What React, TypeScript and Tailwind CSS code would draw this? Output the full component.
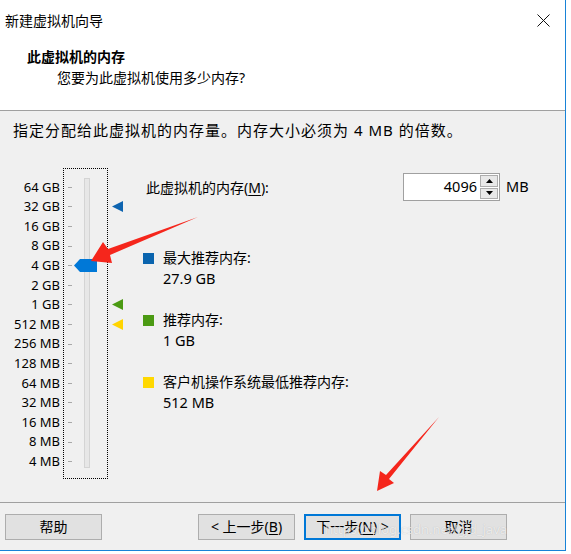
import React from 'react';

const sizes = [
  '64 GB', '32 GB', '16 GB', '8 GB', '4 GB', '2 GB', '1 GB',
  '512 MB', '256 MB', '128 MB', '64 MB', '32 MB', '16 MB', '8 MB', '4 MB',
];

// 右侧三角标记：行号 -> 颜色
const markers: Record<number, string> = { 1: '#0e64b0', 6: '#4b9a13', 7: '#ffd400' };

function Marker({ color }: { color: string }) {
  return (
    <svg width="12" height="11" viewBox="0 0 12 11">
      <polygon points="0,5.5 11,0 11,11" fill={color} />
    </svg>
  );
}

function Legend({ color, title, value, className }: { color: string; title: string; value: string; className?: string }) {
  return (
    <div className={`flex ${className ?? ''}`}>
      <div className="w-[11px] h-[11px] mt-[5px]" style={{ backgroundColor: color }} />
      <div className="ml-[9px] leading-[20px]">
        <div className="text-[14px]">{title}</div>
        <div className="text-[14.5px]">{value}</div>
      </div>
    </div>
  );
}

function Button({ children, primary }: { children: React.ReactNode; primary?: boolean }) {
  return (
    <button
      className={`w-[97px] h-[26px] bg-[#e1e1e1] text-[14px] leading-none flex items-center justify-center ${
        primary ? 'border-2 border-[#0078d7]' : 'border border-[#adadad]'
      }`}
    >
      {children}
    </button>
  );
}

export default function App() {
  return (
    <div className="w-[571px] h-[554px] bg-white text-black relative overflow-hidden font-['Noto_Sans','Noto_Sans_CJK_SC',sans-serif]">
      <div className="w-[566px] h-[551px] border-r border-b border-[#1883d7] flex flex-col">
        {/* 标题栏 */}
        <div className="h-[40px] bg-white flex items-center pl-[5px] pr-[15px]">
          <span className="text-[14px]">新建虚拟机向导</span>
          <svg className="ml-auto" width="13" height="13" viewBox="0 0 13 13">
            <path d="M0.5 0.5 L12.5 12.5 M12.5 0.5 L0.5 12.5" stroke="#111" strokeWidth="1" />
          </svg>
        </div>

        {/* 头部 */}
        <div className="h-[71px] bg-white border-b border-[#a0a0a0] pl-[27px] pt-[7px]">
          <div className="text-[14px] font-bold leading-[20px]">此虚拟机的内存</div>
          <div className="text-[14px] leading-[20px] pl-[30px] mt-[1px]">您要为此虚拟机使用多少内存?</div>
        </div>

        {/* 主体 */}
        <div className="h-[392px] bg-[#f0f0f0] border-b border-[#a0a0a0] pt-[9px]">
          <div className="pl-[13px] text-[15px] tracking-[1px] leading-[20px] whitespace-nowrap">
            指定分配给此虚拟机的内存量。内存大小必须为 4 MB 的倍数。
          </div>

          <div className="flex items-start mt-[28px]">
            {/* 刻度文字 */}
            <div className="w-[60px] pt-[9.6px] flex flex-col items-end">
              {sizes.map((s) => (
                <div key={s} className="h-[19.6px] flex items-center text-[13px] whitespace-nowrap">
                  {s}
                </div>
              ))}
            </div>

            {/* 滑块 */}
            <div className="ml-[3px] w-[45px] h-[311px] border border-dotted border-black relative flex">
              <div className="pt-[8.6px] pl-[4px] flex flex-col">
                {sizes.map((s) => (
                  <div key={s} className="h-[19.6px] flex items-center">
                    <div className="w-[4px] h-px bg-[#a8a8a8]" />
                  </div>
                ))}
              </div>
              <div className="ml-[12px] mt-[9px] w-[6px] h-[290px] bg-[#e7e7e7] border border-[#d4d4d4]" />
              <svg className="absolute left-[10px] top-[90px]" width="23" height="13" viewBox="0 0 23 13">
                <polygon points="0,6.5 6,0 23,0 23,13 6,13" fill="#0078d7" />
              </svg>
            </div>

            {/* 标记 */}
            <div className="ml-[4px] w-[12px] pt-[9.6px] flex flex-col">
              {sizes.map((s, i) => (
                <div key={s} className="h-[19.6px] flex items-center">
                  {markers[i] && <Marker color={markers[i]} />}
                </div>
              ))}
            </div>

            {/* 右侧 */}
            <div className="ml-[19px] flex flex-col">
              <div className="mt-[5px] flex items-center h-[28px]">
                <div className="w-[260px] pl-[3px] text-[14px]">
                  此虚拟机的内存(<span className="underline underline-offset-2">M</span>):
                </div>
                <div className="flex h-[28px] w-[97px] border border-[#a0a0a0] bg-white">
                  <div className="flex-1 flex items-center justify-end pr-[2px] text-[14.5px]">4096</div>
                  <div className="w-[20px] flex flex-col gap-px p-px">
                    <div className="flex-1 bg-[#e8e8e8] border border-[#adadad] flex items-center justify-center">
                      <svg width="7" height="4" viewBox="0 0 7 4"><polygon points="0,4 3.5,0 7,4" fill="#000" /></svg>
                    </div>
                    <div className="flex-1 bg-[#e8e8e8] border border-[#adadad] flex items-center justify-center">
                      <svg width="7" height="4" viewBox="0 0 7 4"><polygon points="0,0 7,0 3.5,4" fill="#000" /></svg>
                    </div>
                  </div>
                </div>
                <div className="ml-[6px] text-[14.5px]">MB</div>
              </div>

              <Legend className="mt-[47px]" color="#0a64ae" title="最大推荐内存:" value="27.9 GB" />
              <Legend className="mt-[22px]" color="#4b9a13" title="推荐内存:" value="1 GB" />
              <Legend className="mt-[22px]" color="#ffd800" title="客户机操作系统最低推荐内存:" value="512 MB" />
            </div>
          </div>
        </div>

        {/* 底部按钮 */}
        <div className="flex-1 bg-[#f0f0f0] flex items-start pt-[11px] pl-[5px]">
          <Button>帮助</Button>
          <div className="ml-[96px] flex gap-[9px]">
            <Button>&lt; 上一步(<span className="underline underline-offset-2">B</span>)</Button>
            <Button primary>下一步(<span className="underline underline-offset-2">N</span>) &gt;</Button>
            <Button>取消</Button>
          </div>
        </div>
      </div>

      {/* 标注箭头 */}
      <svg className="absolute left-0 top-0 pointer-events-none" width="571" height="554" viewBox="0 0 571 554">
        <polygon points="198,217 108,249 103,242 91,261 112,263 110,255" fill="#f5261c" />
        <polygon points="439,417 386,475 380,471 377,491 394,483 389,479" fill="#f5261c" />
      </svg>

      {/* 水印 */}
      <div className="absolute left-[325px] top-[520px] text-[13px] leading-[18px] text-white/70 [text-shadow:0_0_1px_rgba(0,0,0,0.2)] pointer-events-none">
        https://blog.csdn.net/gjd_java
      </div>
    </div>
  );
}
